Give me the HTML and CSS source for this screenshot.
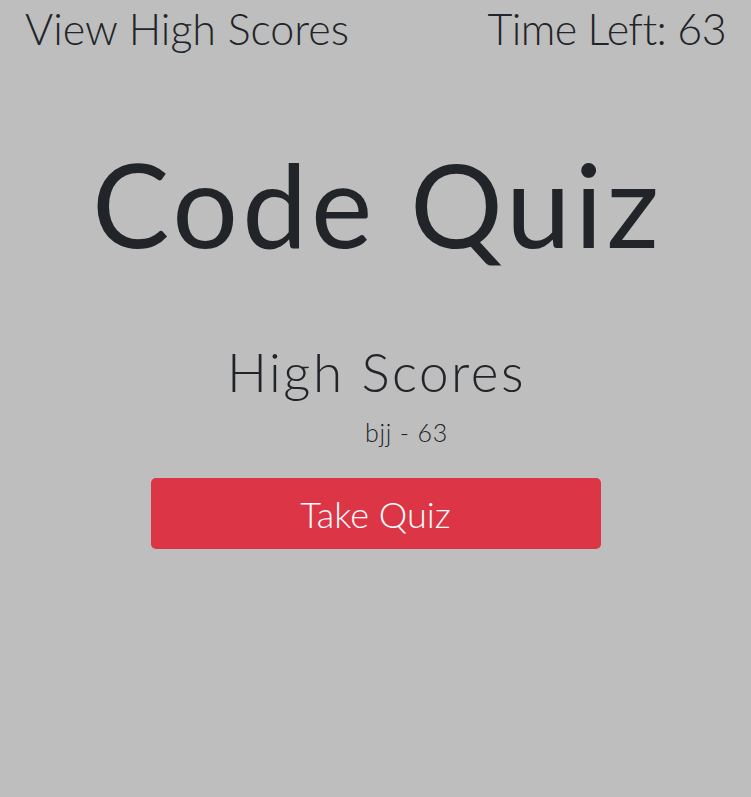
FILE: index.html
```html
<!DOCTYPE html>
<html>
<head>
<meta charset="utf-8">
<link rel="stylesheet" href="styles.css">
</head>
<body>
<header class="topbar">
  <a class="link">View High Scores</a>
  <span class="timer">Time Left: 63</span>
</header>
<main class="main">
  <h1 class="title">Code Quiz</h1>
  <h2 class="subtitle">High Scores</h2>
  <ul class="scores"><li>bjj - 63</li></ul>
  <button class="btn">Take Quiz</button>
</main>
</body>
</html>
```
FILE: styles.css
```css
html, body { margin: 0; padding: 0; }
body {
  background: #bebebe;
  color: #212529;
  font-family: "Lato", "Liberation Sans", sans-serif;
  font-weight: 300;
  width: 751px;
  height: 797px;
  overflow: hidden;
}
.topbar {
  display: flex;
  justify-content: space-between;
  padding: 3px 25px 0 25px;
  font-size: 43px;
  line-height: 52px;
}
.timer { letter-spacing: -0.6px; }
.main {
  display: flex;
  flex-direction: column;
  align-items: center;
}
.title {
  margin: 79px 0 0 0;
  padding-left: 4px;
  font-size: 116px;
  font-weight: 400;
  letter-spacing: 4px;
  line-height: 140px;
}
.subtitle {
  margin: 66px 0 0 0;
  padding-left: 2px;
  font-size: 53px;
  font-weight: 300;
  letter-spacing: 2.5px;
  line-height: 64px;
}
.scores {
  list-style: none;
  margin: 13px 0 0 0;
  padding: 0 0 0 62px;
  font-size: 25px;
  letter-spacing: 0.8px;
  line-height: 30px;
}
.btn {
  margin-top: 31px;
  width: 450px;
  height: 71px;
  background: #dc3545;
  color: #fff;
  border: none;
  border-radius: 5px;
  font-family: inherit;
  font-size: 36px;
  font-weight: 300;
}
```
